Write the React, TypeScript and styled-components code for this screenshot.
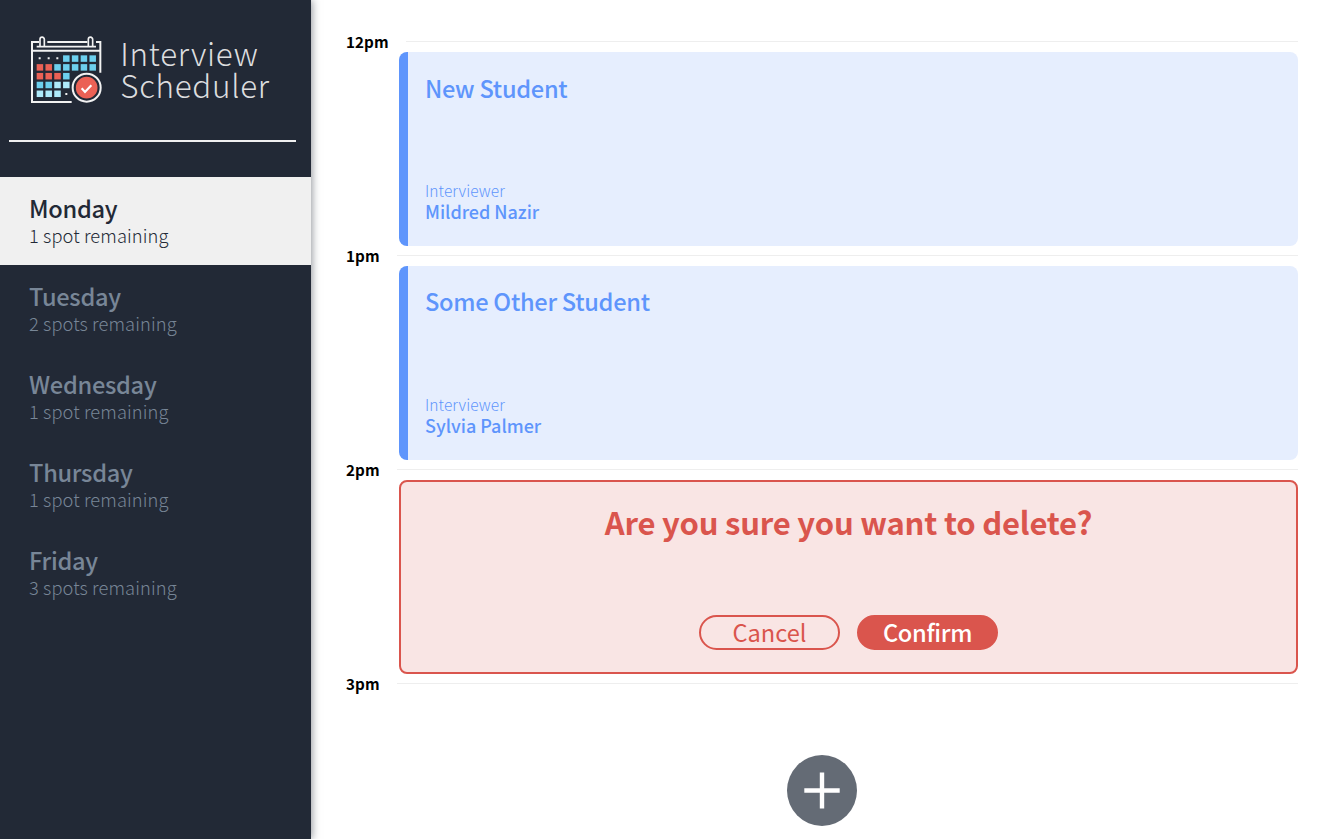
import React from "react";
import styled, { createGlobalStyle } from "styled-components";

const GlobalStyle = createGlobalStyle`
  * { box-sizing: border-box; }
  body {
    margin: 0;
    background: #fff;
    font-family: "Noto Sans CJK SC", "Noto Sans", sans-serif;
    font-size: 16px;
  }
  h1, h2, h3, h4, p, ul { margin: 0; padding: 0; }
`;

const Layout = styled.main`
  display: flex;
  height: 839px;
  overflow: hidden;
`;

const Sidebar = styled.section`
  width: 311px;
  flex: none;
  background: #222936;
  box-shadow: 1px 0 8px rgba(34, 41, 54, 0.5);
`;

const Brand = styled.div`
  display: flex;
  height: 140px;
  padding: 35px 0 0 30px;
`;

const BrandName = styled.h1`
  margin: 2px 0 0 17px;
  font-size: 31.4px;
  font-weight: 300;
  line-height: 32px;
  letter-spacing: 0.7px;
  color: #dcdddf;
`;

const Divider = styled.hr`
  width: 287px;
  height: 2px;
  margin: 0 0 35px 9px;
  border: 0;
  background: #f0f0f0;
`;

const DayItem = styled.li<{ $selected?: boolean }>`
  height: 88px;
  padding: 16px 30px 0 29px;
  list-style: none;
  background: ${(p) => (p.$selected ? "#f0f0f0" : "transparent")};
  color: ${(p) => (p.$selected ? "#222936" : "#788697")};
`;

const DayName = styled.h2`
  font-size: 23.6px;
  line-height: 30px;
  font-weight: 500;
  letter-spacing: -0.28px;
`;

const DaySpots = styled.h3`
  font-size: 18.3px;
  line-height: 24px;
  font-weight: 300;
  letter-spacing: 0.1px;
`;

const Schedule = styled.section`
  flex: 1;
  padding: 30px 22px 0 35px;
`;

const Slot = styled.article`
  height: 213.85px;
`;

const SlotHeader = styled.header`
  display: flex;
  align-items: flex-start;
  height: 22px;
`;

const SlotTime = styled.h4`
  font-size: 15.2px;
  line-height: 22px;
  font-weight: 700;
  letter-spacing: 0.1px;
  color: #000;
`;

const Rule = styled.div`
  flex: 1;
  height: 1px;
  margin: 11px 0 0 17px;
  background: #eee;
`;

const Booking = styled.div`
  display: flex;
  flex-direction: column;
  justify-content: space-between;
  height: 194px;
  margin-left: 53px;
  padding: 19.6px 18px 24px 17px;
  border-left: 9px solid #5e95fc;
  border-radius: 8px;
  background: #e6eefe;
  color: #5e95fc;
`;

const Student = styled.h2`
  font-size: 23.6px;
  line-height: 32px;
  font-weight: 500;
  letter-spacing: -0.28px;
`;

const Caption = styled.h4`
  font-size: 15.5px;
  line-height: 20px;
  font-weight: 300;
  letter-spacing: 0.08px;
`;

const Interviewer = styled.h3`
  font-size: 18px;
  line-height: 22px;
  font-weight: 500;
  letter-spacing: -0.03px;
`;

const ConfirmBox = styled.div`
  display: flex;
  flex-direction: column;
  align-items: center;
  justify-content: space-between;
  height: 194px;
  margin-left: 53px;
  padding: 19px 0 22px;
  border: 2px solid #da554d;
  border-radius: 8px;
  background: #f9e5e4;
`;

const Question = styled.h1`
  font-size: 31px;
  line-height: 42px;
  font-weight: 700;
  letter-spacing: -0.2px;
  color: #da554d;
`;

const Actions = styled.div`
  display: flex;
  gap: 17px;
`;

const Button = styled.button<{ $filled?: boolean }>`
  width: 141px;
  height: 35px;
  padding: 0;
  border: 2px solid #da554d;
  border-radius: 18px;
  background: ${(p) => (p.$filled ? "#da554d" : "transparent")};
  color: ${(p) => (p.$filled ? "#fff" : "#da554d")};
  font-family: inherit;
  font-size: 23.6px;
  font-weight: ${(p) => (p.$filled ? 500 : 400)};
  letter-spacing: ${(p) => (p.$filled ? "-0.3px" : "0")};
  line-height: 31px;
`;

const AddButton = styled.button`
  display: block;
  width: 70px;
  height: 71px;
  margin: 61.45px auto 0;
  padding: 0;
  border: 0;
  background: none;
`;

const BLUE = "#6dd0ee";
const RED = "#eb6155";
const PALE = "#aeeafa";

const cells: (string | null)[][] = [
  [null, null, null, BLUE, BLUE, BLUE, BLUE],
  [RED, RED, BLUE, BLUE, BLUE, BLUE, BLUE],
  [RED, RED, RED, BLUE],
  [BLUE, BLUE, PALE, PALE],
  [PALE, PALE, PALE],
];

const CalendarLogo = () => (
  <svg width="73.33" height="70" viewBox="30 30 220 210" fill="none">
    <g stroke="#f2f2f2" strokeWidth="6">
      <path d="M57 51H36V231H155M82 51H202M228 51H241V143M36 77H241" />
      <path d="M50 65H228" strokeWidth="5" />
      <path d="M60 63V43a6.500 6.500 0 0 1 13 0V63M205 63V43a6.500 6.500 0 0 1 13 0V63" strokeWidth="5" />
    </g>
    {cells.map((row, r) =>
      row.map((fill, c) =>
        fill ? <rect key={`${r}-${c}`} x={50 + c * 26.4} y={91 + r * 26.4} width="19.500" height="19.500" fill={fill} /> : null
      )
    )}
    <path d="M56 97h6v6h-6zM83 97h6v6h-6zM109 97h6v6h-6zM136 204h6v6h-6z" fill="#f2f2f2" />
    <circle cx="200" cy="188" r="49" fill="#222936" />
    <circle cx="200" cy="188" r="42" stroke="#f2f2f2" strokeWidth="6" />
    <circle cx="200" cy="188" r="32.500" fill={RED} />
    <path d="M185 190l10 11 19-20" stroke="#fff" strokeWidth="6.500" />
  </svg>
);

const days = [
  { name: "Monday", spots: "1 spot remaining" },
  { name: "Tuesday", spots: "2 spots remaining" },
  { name: "Wednesday", spots: "1 spot remaining" },
  { name: "Thursday", spots: "1 spot remaining" },
  { name: "Friday", spots: "3 spots remaining" },
];

const bookings = [
  { time: "12pm", student: "New Student", interviewer: "Mildred Nazir" },
  { time: "1pm", student: "Some Other Student", interviewer: "Sylvia Palmer" },
];

const TimeHeader = ({ time }: { time: string }) => (
  <SlotHeader>
    <SlotTime>{time}</SlotTime>
    <Rule />
  </SlotHeader>
);

export default function App() {
  return (
    <Layout>
      <GlobalStyle />
      <Sidebar>
        <Brand>
          <CalendarLogo />
          <BrandName>
            Interview
            <br />
            Scheduler
          </BrandName>
        </Brand>
        <Divider />
        <ul>
          {days.map((d, i) => (
            <DayItem key={d.name} $selected={i === 0}>
              <DayName>{d.name}</DayName>
              <DaySpots>{d.spots}</DaySpots>
            </DayItem>
          ))}
        </ul>
      </Sidebar>
      <Schedule>
        {bookings.map((b) => (
          <Slot key={b.time}>
            <TimeHeader time={b.time} />
            <Booking>
              <Student>{b.student}</Student>
              <div>
                <Caption>Interviewer</Caption>
                <Interviewer>{b.interviewer}</Interviewer>
              </div>
            </Booking>
          </Slot>
        ))}
        <Slot>
          <TimeHeader time="2pm" />
          <ConfirmBox>
            <Question>Are you sure you want to delete?</Question>
            <Actions>
              <Button>Cancel</Button>
              <Button $filled>Confirm</Button>
            </Actions>
          </ConfirmBox>
        </Slot>
        <TimeHeader time="3pm" />
        <AddButton aria-label="Add">
          <svg width="70" height="71" viewBox="0 0 70 71">
            <ellipse cx="35" cy="35.500" rx="35" ry="35.500" fill="#646b75" />
            <path d="M17.300 35.500H52.700M35 17.500V53.500" stroke="#fff" strokeWidth="4.400" />
          </svg>
        </AddButton>
      </Schedule>
    </Layout>
  );
}
